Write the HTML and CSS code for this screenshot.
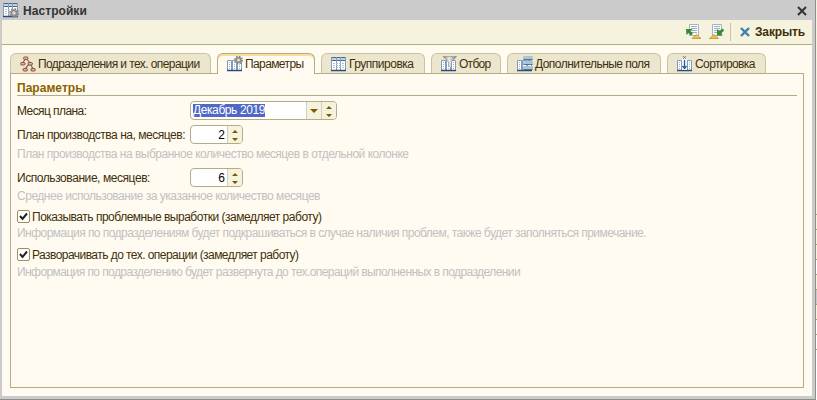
FILE: index.html
```html
<!DOCTYPE html>
<html lang="ru">
<head>
<meta charset="utf-8">
<title>Настройки</title>
<link rel="stylesheet" href="styles.css">
</head>
<body>
<svg class="defs" width="0" height="0" aria-hidden="true">
  <defs>
    <linearGradient id="silver" x1="0" x2="1"><stop offset="0" stop-color="#777"/><stop offset=".45" stop-color="#eee"/><stop offset="1" stop-color="#777"/></linearGradient>
    <symbol id="table" viewBox="0 0 16 16">
      <path fill="#fff" d="M0 1h15v14H0z"/>
      <path fill="#bfd4e8" d="M0 1h15v3H0z"/>
      <path stroke="#46668a" d="M0 1.500h15M0 4.500h15" fill="none"/>
      <path stroke="#7f9dbd" d="M.5 1v14M5.500 1v14M9.500 1v14M14.500 1v14" fill="none"/>
      <path stroke="#b4bec8" stroke-dasharray="2 1" d="M2 7.500h12M2 9.500h12M2 11.500h12" fill="none"/>
      <path stroke="#294c78" stroke-width="1.500" d="M0 14.500h15"/>
    </symbol>
    <symbol id="columns" viewBox="0 0 16 16">
      <path fill="#fff" stroke="#7f9dbd" d="M.5 4.500h4v10h-4zM5.500 4.500h4v10h-4zM10.500 4.500h4v10h-4z"/>
      <path stroke="#a9b4bf" stroke-dasharray="1 1" d="M2.500 6v8M7.500 6v8M12.500 6v8"/>
      <path stroke="#294c78" stroke-width="1.500" d="M0 14.500h15"/>
    </symbol>
    <symbol id="gear" viewBox="0 0 10 10">
      <circle cx="5" cy="5" r="4.200" fill="none" stroke="#858585" stroke-width="1.500" stroke-dasharray="1.700 1.600"/>
      <circle cx="5" cy="5" r="2.700" fill="#ddd" stroke="#8e8e8e" stroke-width="2"/>
    </symbol>
    <symbol id="spin" viewBox="0 0 6 12"><path fill="#7c5800" d="M0 4 3 1l3 3zM0 9h6l-3 3z"/></symbol>
    <symbol id="page" viewBox="0 0 16 16">
      <path fill="#f8fbff" stroke="#a6b4c3" d="M3.500.5h9v11h-9z"/>
      <path stroke="#9eafc2" d="M5 2.500h6M5 4.500h6M5 6.500h6M5 8.500h6"/>
    </symbol>
  </defs>
</svg>
<div class="desktop">
<div class="window">
  <header class="titlebar">
    <svg class="title-icon" width="16" height="16"><use href="#table" width="16" height="16"/><use href="#gear" x="6" y="6" width="10" height="10"/></svg>
    <span class="title">Настройки</span>
    <svg class="title-close" width="10" height="10"><path d="M1 1l8 8M9 1l-8 8" stroke="#333" stroke-width="2"/></svg>
  </header>
  <div class="toolbar">
    <svg class="tool" width="16" height="16"><use href="#page" width="16" height="16"/><path fill="#ecc24a" stroke="#c99120" stroke-width=".8" d="M6 14.500 10.500 10.500l4.500 4z"/><path fill="#398a25" d="M0 5h6.500l-2 2 2.500 2.500-2 2L2.500 9 .5 11z"/></svg>
    <svg class="tool" width="16" height="16"><use href="#page" width="16" height="16"/><path fill="#ecc24a" stroke="#c99120" stroke-width=".8" d="M.5 14.500 5 10.500l4.500 4z"/><path fill="#398a25" d="M8 11.500V5l2 2 4-2.500 1 2-3 3 2 2z"/></svg>
    <i class="divider"></i>
    <svg class="close-icon" width="10" height="10"><path d="M1 1l8 8M9 1l-8 8" stroke="#3d7fae" stroke-width="2.400"/></svg>
    <b class="close-text">Закрыть</b>
  </div>
  <main class="body">
    <nav class="tabs">
      <div class="tab t1"><svg width="16" height="16"><path d="M6 2 3 6.500M6 2l4 5-5 6M10 7l3 6" fill="none" stroke="#54758f" stroke-width="1.200"/><g fill="#eeb491" stroke="#96492a"><rect x="3.500" y="1" width="4.500" height="2.500" rx="1.200"/><rect x=".6" y="6.500" width="4.500" height="2.500" rx="1.200"/><rect x="8" y="6.500" width="4.500" height="2.500" rx="1.200"/><rect x="3" y="12.500" width="4.500" height="2.500" rx="1.200"/><rect x="10.800" y="12.500" width="4.500" height="2.500" rx="1.200"/></g></svg><span class="label-units">Подразделения и тех. операции</span></div>
      <div class="tab t2 active"><svg width="16" height="16"><use href="#columns" width="16" height="16"/><use href="#gear" x="7" y="-.5" width="9" height="9"/></svg><span class="label-params">Параметры</span></div>
      <div class="tab t3"><svg width="16" height="16"><use href="#table" width="16" height="16"/></svg><span class="label-group">Группировка</span></div>
      <div class="tab t4"><svg width="16" height="16"><use href="#columns" width="16" height="16"/><path fill="url(#silver)" stroke="#888" stroke-width=".6" d="M2 .5h13.500L10.500 6v6l-3-2V6z"/></svg><span class="label-filter">Отбор</span></div>
      <div class="tab t5"><svg width="16" height="16"><use href="#columns" width="16" height="16"/><g fill="#a9c6d6"><rect x="6" y="0" width="10" height="4" rx="1"/><rect x="6" y="5" width="10" height="4" rx="1"/><rect x="6" y="10" width="10" height="4" rx="1"/></g><path stroke="#4d7894" d="M6.500 3.500h9M6.500 8.500h9M6.500 13.500h9"/></svg><span class="label-fields">Дополнительные поля</span></div>
      <div class="tab t6"><svg width="16" height="16"><use href="#columns" width="16" height="16"/><path fill="#f4f8fc" d="M5 2h5v12H5z"/><path d="M7.500 4v8M5.500 10l2 2.500 2-2.500" fill="none" stroke="#285d91" stroke-width="1.300"/><path d="M6 0l3 3M9 0 6 3" stroke="#567" stroke-width=".8"/></svg><span class="label-sort">Сортировка</span></div>
    </nav>
    <section class="panel">
      <h1>Параметры</h1>
      <div class="row r1"><label class="label-month">Месяц плана:</label>
        <div class="field date"><span class="value"><mark>Декабрь 2019</mark></span><i class="btn"><svg width="8" height="4"><path fill="#7c5800" d="M0 0h8L4 4z"/></svg></i><i class="btn"><svg width="6" height="12"><use href="#spin"/></svg></i></div></div>
      <div class="row r2"><label class="label-plan">План производства на, месяцев:</label>
        <div class="field num"><span class="value">2</span><i class="btn"><svg width="6" height="12"><use href="#spin"/></svg></i></div></div>
      <p class="hint hint-plan">План производства на выбранное количество месяцев в отдельной колонке</p>
      <div class="row r3"><label class="label-usage">Использование, месяцев:</label>
        <div class="field num"><span class="value">6</span><i class="btn"><svg width="6" height="12"><use href="#spin"/></svg></i></div></div>
      <p class="hint hint-usage">Среднее использование за указанное количество месяцев</p>
      <div class="check c1"><i class="box"><svg width="9" height="9"><path d="M1 4l2.500 3L8 1.500" fill="none" stroke="#222" stroke-width="2"/></svg></i><span>Показывать проблемные выработки (замедляет работу)</span></div>
      <p class="hint hint-problems">Информация по подразделениям будет подкрашиваться в случае наличия проблем, также будет заполняться примечание.</p>
      <div class="check c2"><i class="box"><svg width="9" height="9"><path d="M1 4l2.500 3L8 1.500" fill="none" stroke="#222" stroke-width="2"/></svg></i><span>Разворачивать до тех. операции (замедляет работу)</span></div>
      <p class="hint hint-expand">Информация по подразделению будет развернута до тех.операций выполненных в подразделении</p>
    </section>
  </main>
</div>
<aside class="edge"><i class="top"></i><i></i><i></i><i></i><i class="white"></i><i></i><i class="gray"></i><i></i><i class="white"></i><i class="white"></i><i class="rest"></i></aside>
</div>
</body>
</html>
```
FILE: styles.css
```css
* { box-sizing: border-box; }
body { margin: 0; width: 817px; height: 400px; overflow: hidden; font: 12px/14px "Liberation Sans", Arial, sans-serif; color: #40300a; }
.defs { position: absolute; }
.desktop { display: flex; height: 400px; }
.window { width: 816px; height: 400px; flex: none; display: flex; flex-direction: column; background: #cbcbcb; border-right: 1px solid #8e8e8e; border-bottom: 1px solid #8e8e8e; padding: 0 3px 3px 2px; }
.titlebar { height: 20px; flex: none; display: flex; align-items: center; padding: 0 5px 0 1px; }
.title { font-weight: bold; color: #333; margin: 2px auto 0 4px; white-space: nowrap; letter-spacing: 0.06px; }
.title-close { margin-top: 1px; }
.toolbar { height: 25px; flex: none; background: #f5f2dd; border-bottom: 1px solid #b3ac86; display: flex; align-items: center; justify-content: flex-end; padding-right: 6px; }
.tool { margin-right: 7px; }
.divider { width: 1px; height: 18px; background: #c9c3a2; margin: 0 9px 0 -2px; }
.close-icon { margin-right: 5px; }
.close-text { width: 51px; white-space: nowrap; letter-spacing: -0.15px; }
.body { flex: 1; background: #fffbf0; padding: 8px; display: flex; flex-direction: column; }
.tabs { display: flex; gap: 6px; height: 20px; position: relative; z-index: 1; }
.tab { height: 20px; flex: none; display: flex; align-items: center; gap: 2px; padding: 0 0 0 9px; background: #ece6cf; border: 1px solid #c9c3a2; border-bottom: 0; border-radius: 6px 6px 0 0; white-space: nowrap; }
.tab svg { flex: none; }
.t1 { width: 201px; }
.t2 { width: 98px; }
.t3 { width: 104px; }
.t4 { width: 70px; }
.t5 { width: 154px; }
.t6 { width: 99px; }
.label-units { letter-spacing: -0.588px; }
.label-params { letter-spacing: -0.608px; }
.label-group { letter-spacing: -0.499px; }
.label-filter { letter-spacing: -0.713px; }
.label-fields { letter-spacing: -0.539px; }
.label-sort { letter-spacing: -0.6px; }
.tab.active { height: 21px; background: #fffbf0; border-color: #b3ac86; box-shadow: inset 0 2px #fbdc9a; padding-bottom: 1px; }
.panel { flex: 1; border: 1px solid #b3ac86; padding: 7px 6px 0; }
h1 { margin: 0; font-size: 12px; line-height: 15px; height: 15px; border-bottom: 1px solid #b3ac86; color: #8a6200; letter-spacing: 0.03px; }
.row { display: flex; height: 19px; align-items: center; white-space: nowrap; }
label { width: 173px; flex: none; }
.label-month { letter-spacing: -0.569px; }
.label-plan { letter-spacing: -0.474px; }
.label-usage { letter-spacing: -0.433px; }
.r1 { margin-top: 5px; }
.r2 { margin-top: 5px; }
.r3 { margin-top: 7px; }
.field { display: flex; height: 19px; border: 1px solid #b3ac86; border-radius: 4px; background: #fff; overflow: hidden; color: #000; }
.date { width: 147px; }
.num { width: 53px; }
.value { flex: 1; line-height: 18px; }
.date .value { padding: 2px 0 0 2px; line-height: 13px; }
.num .value { text-align: right; padding-right: 2px; }
mark { display: inline-block; height: 13px; background: #4f68c6; color: #fff; letter-spacing: -0.402px; }
.btn { width: 15px; border-left: 1px solid #d4cfb0; background: #f5f2dd; display: flex; align-items: center; justify-content: center; }
.hint { margin: 0; height: 14px; color: #c1c1c1; white-space: nowrap; }
.hint-plan { margin-top: 3px; letter-spacing: -0.494px; }
.hint-usage { margin-top: 2px; letter-spacing: -0.477px; }
.hint-problems { margin-top: 3px; letter-spacing: -0.538px; }
.hint-expand { margin-top: 4px; letter-spacing: -0.583px; }
.check { display: flex; height: 13px; align-items: center; gap: 2px; white-space: nowrap; }
.c1 { margin-top: 7px; letter-spacing: -0.484px; }
.c2 { margin-top: 8px; letter-spacing: -0.547px; }
.box { width: 13px; height: 13px; border: 1px solid #9a9062; border-radius: 2px; background: #fff; display: flex; align-items: center; justify-content: center; flex: none; }
.edge { width: 1px; display: flex; flex-direction: column; }
.edge i { height: 15px; flex: none; background: #f5f2dd; border-bottom: 1px solid #b39d60; }
.edge .top { height: 215px; }
.edge .white { background: #fff; }
.edge .gray { background: #cbcbcb; }
.edge .rest { flex: 1; background: #fff; border: 0; }
```
